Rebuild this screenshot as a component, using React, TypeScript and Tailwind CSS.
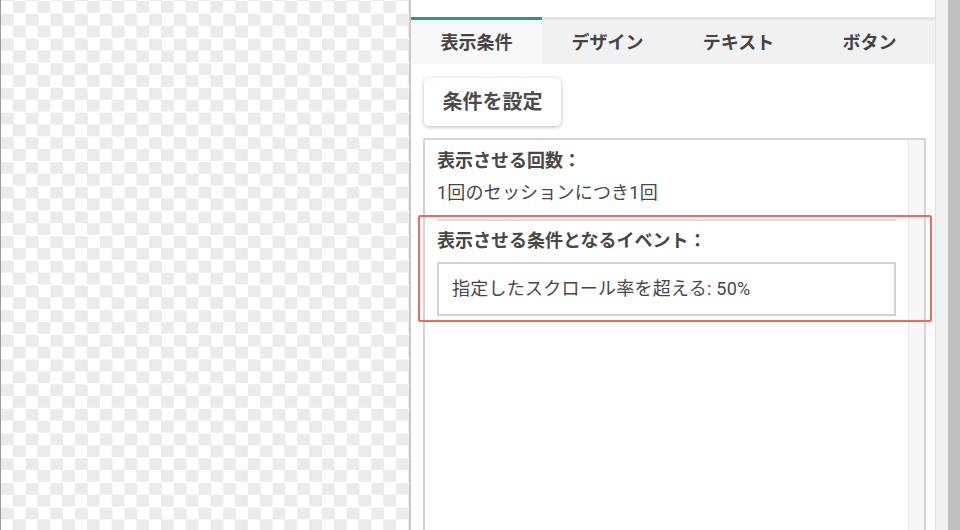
import React from "react";

const tabs = ["表示条件", "デザイン", "テキスト", "ボタン"];

export default function App() {
  return (
    <div className="relative flex h-[530px] w-[960px] overflow-hidden bg-white font-['Roboto','Noto_Sans_CJK_JP',sans-serif] text-[#474747]">
      {/* canvas */}
      <div className="flex h-full w-[409px] shrink-0">
        <div className="h-full w-[1px] bg-[#9a9a9a]" />
        <div className="h-full flex-1 bg-[conic-gradient(#ebebeb_25%,#ffffff_0_50%,#ebebeb_0_75%,#ffffff_0)] bg-[length:24.7px_24.7px] bg-[position:0px_1px]" />
      </div>

      {/* panel */}
      <div className="flex h-full w-[526px] shrink-0 flex-col border-l-2 border-[#c9c9c9] bg-white">
        <div className="h-[17px] shrink-0" />
        <div className="flex h-[47px] shrink-0">
          {tabs.map((t, i) => (
            <div
              key={t}
              className={
                i === 0
                  ? "flex flex-1 items-center justify-center border-t-[3px] border-[#17a08e] bg-[#f8f8f8] text-[18px] font-bold text-[#444444]"
                  : "flex flex-1 items-center justify-center border-t-[3px] border-[#e4e4e4] bg-[#f1f1f1] text-[18px] font-bold text-[#444444]"
              }
            >
              {t}
            </div>
          ))}
        </div>

        <div className="flex min-h-0 flex-1 flex-col pl-[12px] pr-[9px] pt-[14px]">
          <div className="flex">
            <button className="ml-[1px] flex h-[48px] w-[137px] items-center justify-center rounded-[5px] bg-white text-[20px] font-bold text-[#4c4c4c] shadow-[0_1px_4px_rgba(0,0,0,0.28)]">
              条件を設定
            </button>
          </div>

          <div className="mt-[12px] flex min-h-0 flex-1 border-2 border-b-0 border-[#d4d4d4]">
            <div className="flex min-w-0 flex-1 flex-col pl-[12px] pr-[12px] pt-[5px]">
              <div className="text-[18px] font-bold leading-[32px]">表示させる回数：</div>
              <div className="text-[18px] leading-[32px] tracking-[0.2px]">1回のセッションにつき1回</div>
              <div className="mt-[10px] h-[2px] bg-[#dedede]" />
              <div className="mt-[4px] text-[18px] font-bold leading-[32px]">
                表示させる条件となるイベント：
              </div>
              <div className="mt-[5px] border-2 border-[#d2d2d2] py-[9px] pl-[13px] text-[18px] leading-[32px] tracking-[0.25px]">
                指定したスクロール率を超える: 50%
              </div>
            </div>
            <div className="w-[16px] shrink-0 border-l border-[#e6e6e6] bg-[#f7f7f7]" />
          </div>
        </div>
      </div>

      {/* right strips */}
      <div className="h-full w-[13px] shrink-0 border-l border-[#e2e2e2] bg-[#f0f0f0]" />
      <div className="h-full w-[12px] shrink-0 bg-[#bfbfbf]" />

      {/* annotation */}
      <div className="pointer-events-none absolute left-[418px] top-[215px] h-[107px] w-[514px] rounded-[2px] border-2 border-[#f26861]" />
    </div>
  );
}
